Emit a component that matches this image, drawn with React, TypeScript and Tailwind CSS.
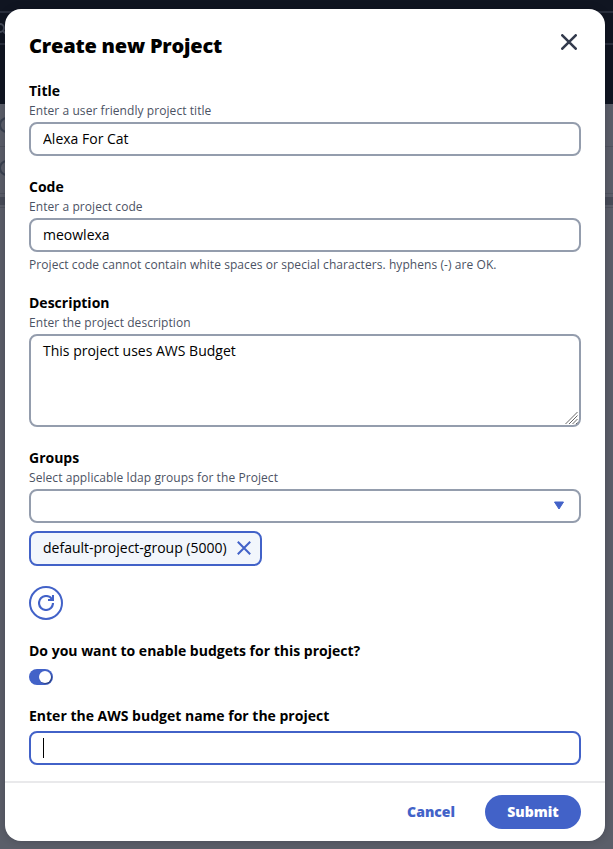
import type { ReactNode } from "react";

type FieldProps = { label: string; hint?: string; children: ReactNode };

function Field({ label, hint, children }: FieldProps) {
  return (
    <section className="flex flex-col items-start">
      <label className="h-[22px] text-sm leading-[22px] font-bold">{label}</label>
      {hint && <p className="mb-0.5 h-[18px] text-xs leading-[18px] tracking-[0.07px] text-[#4b5263]">{hint}</p>}
      {children}
    </section>
  );
}

const inputClass =
  "h-[34px] w-full rounded-lg border-2 border-[#949dad] bg-white px-3 pb-0.5 text-sm text-black outline-none";

function Backdrop() {
  return (
    <div className="absolute inset-0 flex flex-col overflow-hidden bg-[#5b5e69]">
      <div className="h-[104px] shrink-0 bg-[#101521] pt-[11px]">
        <div className="flex h-[34px] items-center border-y-2 border-[#292e3c]">
          <svg className="-ml-1 size-[13px]" viewBox="0 0 13 13" fill="none" stroke="#444a58" strokeWidth="2">
            <circle cx="4" cy="6" r="4" />
            <path d="m7 9 4 4" />
          </svg>
        </div>
      </div>
      <div className="flex h-[42px] shrink-0 items-center">
        <div className="-ml-px size-4 rounded-full border-2 border-[#3a4150]" />
      </div>
      <div className="flex h-[48px] shrink-0 items-center border-y border-[#50535e]">
        <div className="-ml-px -mt-1 size-4 rounded-full border-2 border-[#3a4150]" />
      </div>
      <div className="mt-[3px] h-2 shrink-0 bg-[#474b57]" />
      <div className="mt-0.5 h-px shrink-0 bg-[#50535e]" />
    </div>
  );
}

export default function App() {
  return (
    <main className="relative h-[849px] w-[613px] px-[5px] pt-[9px] font-['Open_Sans','Noto_Sans',sans-serif] text-black antialiased">
      <Backdrop />
      <div role="dialog" className="relative flex h-[832px] w-[600px] flex-col rounded-2xl bg-white shadow-[0_0_8px_rgba(0,7,22,0.2)]">
        <header className="flex h-[71px] shrink-0 items-start justify-between px-6 pt-[25px]">
          <h1 className="text-xl leading-6 font-extrabold tracking-[-0.2px]">Create new Project</h1>
          <button aria-label="Close" className="mr-1">
            <svg className="size-4" viewBox="0 0 16 16" fill="none" stroke="#333b4d" strokeWidth="2.6" strokeLinecap="round">
              <path d="m1.300 1.300 13.400 13.400M14.700 1.300 1.300 14.700" />
            </svg>
          </button>
        </header>

        <div className="flex flex-1 flex-col gap-5 px-6">
          <Field label="Title" hint="Enter a user friendly project title">
            <input className={inputClass} defaultValue="Alexa For Cat" />
          </Field>
          <Field label="Code" hint="Enter a project code">
            <input className={inputClass} defaultValue="meowlexa" />
            <p className="mt-1 h-4 text-xs leading-[18px] tracking-[0.07px] text-[#4b5263]">
              Project code cannot contain white spaces or special characters. hyphens (-) are OK.
            </p>
          </Field>
          <Field label="Description" hint="Enter the project description">
            <div className="relative h-[93px] w-full">
              <textarea
                className="block h-full w-full resize-none rounded-lg border-2 border-[#949dad] px-3 py-1 text-sm leading-[22px] outline-none"
                defaultValue="This project uses AWS Budget"
              />
              <svg className="absolute right-[3px] bottom-[3px] h-3 w-[13px]" viewBox="0 0 13 12" stroke="#666" strokeWidth="1">
                <path d="M.5 12 12.5 0M4 12l8.500-8.500M7.500 12l5-5M11 12l1.500-1.500" />
              </svg>
            </div>
          </Field>
          <Field label="Groups" hint="Select applicable ldap groups for the Project">
            <button className={inputClass + " flex items-center justify-end"} aria-label="Groups">
              <svg className="mt-px mr-0.5 h-[9px] w-3" viewBox="0 0 12 9" fill="#4262c8">
                <path d="M1.500 1h9L6 8z" stroke="#4262c8" strokeLinejoin="round" />
              </svg>
            </button>
            <div className="mt-2 flex h-[35px] w-[233px] items-center justify-between rounded-lg border-2 border-[#4262c8] bg-[#f2f6fc] pr-[9px] pl-3 text-sm">
              <span className="pb-0.5">default-project-group (5000)</span>
              <svg className="-mt-px size-[14px]" viewBox="0 0 14 14" fill="none" stroke="#4262c8" strokeWidth="2">
                <path d="m.8.8 12.4 12.4M13.2.8.8 13.2" />
              </svg>
            </div>
          </Field>
          <button aria-label="Refresh" className="flex size-[34px] items-center justify-center rounded-full border-2 border-[#4262c8]">
            <svg className="size-4" viewBox="0 0 16 16" fill="none" stroke="#4262c8" strokeWidth="2.1">
              <path d="M10 5h5V0" />
              <path d="M15 8a6.96 6.96 0 0 1-7 7 6.96 6.96 0 0 1-7-7 6.96 6.96 0 0 1 7-7 6.870 6.870 0 0 1 6.300 4" />
            </svg>
          </button>
          <Field label="Do you want to enable budgets for this project?">
            <button role="switch" aria-checked="true" aria-label="Enable budgets" className="mt-[7px] flex h-4 w-6 items-center justify-end rounded-full bg-[#4262c8] pr-0.5">
              <span className="size-3 rounded-full bg-white shadow-[1px_1px_1px_rgba(0,7,22,0.4)]" />
            </button>
          </Field>
          <Field label="Enter the AWS budget name for the project">
            <div className="mt-1 flex h-[34px] w-full items-center rounded-lg border-2 border-[#4262c8] px-3">
              <span className="h-5 w-px bg-black" />
            </div>
          </Field>
        </div>

        <footer className="flex h-[60px] shrink-0 items-center justify-end gap-[30px] border-t-2 border-[#e9e9eb] px-6 text-sm font-extrabold">
          <button className="text-[#4262c8]">Cancel</button>
          <button className="h-[34px] w-24 rounded-full bg-[#4262c8] text-white">Submit</button>
        </footer>
      </div>
    </main>
  );
}
